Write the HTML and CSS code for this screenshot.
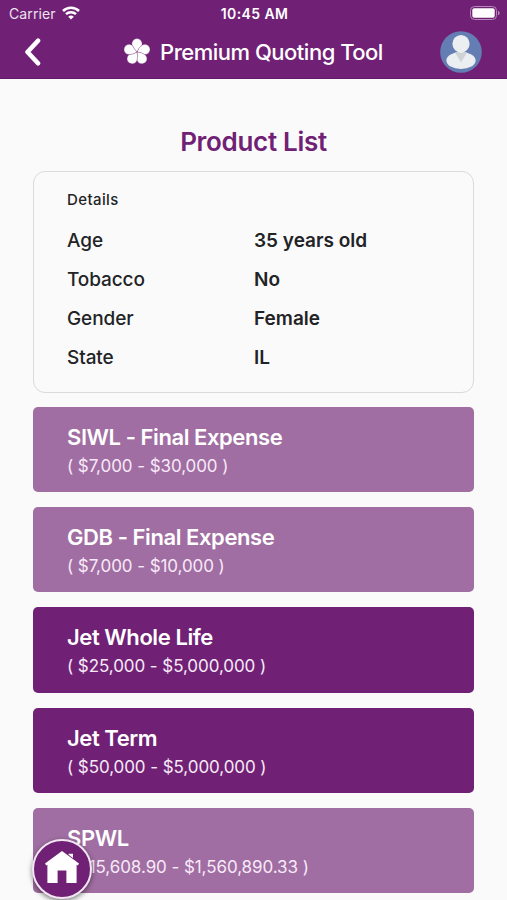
FILE: index.html
```
<!DOCTYPE html>
<html lang="en">
  <head>
    <meta charset="UTF-8" />
    <meta name="viewport" content="width=device-width, initial-scale=1.0" />
    <title>Premium Quoting Tool</title>
    <link rel="stylesheet" href="styles.css">
  </head>
  <body>
    <header class="header">
      <div class="status-bar">
        <div class="carrier">
          <span>Carrier</span>
          <svg class="wifi" viewBox="0 0 18 14">
            <path d="M1 5a11.4 11.4 0 0 1 16 0" />
            <path d="M4 8.2a7.1 7.1 0 0 1 10 0" />
            <path class="wifi-dot" d="M9 13.6 6.2 10.8a4 4 0 0 1 5.6 0z" />
          </svg>
        </div>
        <span class="time">10:45 AM</span>
        <svg class="battery" viewBox="0 0 30 14">
          <rect class="battery-case" x="0.5" y="0.5" width="26" height="13" rx="4" />
          <rect x="2.3" y="2.3" width="22.4" height="9.4" rx="2" />
          <path class="battery-cap" d="M28 4.7c2.2.8 2.2 3.8 0 4.6z" />
        </svg>
      </div>
      <nav class="nav-bar">
        <button class="back" type="button" aria-label="Back">
          <svg viewBox="0 0 18 28"><path d="M14 2.8 3.5 14 14 25.2" /></svg>
        </button>
        <div class="brand">
          <svg class="flower" viewBox="-14 -14 28 28">
            <path id="petal" d="M0 0Q-3.4-2.6-4.6-6.1A5.1 5.1 0 1 1 4.6-6.1Q2-3.6 0 0z" />
            <use href="#petal" transform="rotate(72)" />
            <use href="#petal" transform="rotate(144)" />
            <use href="#petal" transform="rotate(216)" />
            <use href="#petal" transform="rotate(288)" />
          </svg>
          <span class="brand-name">Premium Quoting Tool</span>
        </div>
        <svg class="avatar" viewBox="0 0 42 42">
          <circle cx="21" cy="21" r="20.8" fill="#647eb4" />
          <ellipse cx="21" cy="29.5" rx="14.6" ry="8.4" fill="#eceff1" />
          <path d="M15 21.5h12l-6 10z" fill="#cfd3d4" />
          <ellipse cx="21" cy="12.8" rx="8.6" ry="8.9" fill="#eceff1" />
        </svg>
      </nav>
    </header>

    <main class="content">
      <h1>Product List</h1>

      <section class="details">
        <h2>Details</h2>
        <dl>
          <dt>Age</dt>
          <dd>35 years old</dd>
          <dt>Tobacco</dt>
          <dd>No</dd>
          <dt>Gender</dt>
          <dd>Female</dd>
          <dt>State</dt>
          <dd>IL</dd>
        </dl>
      </section>

      <div class="products">
        <div class="product light">
          <h3>SIWL - Final Expense</h3>
          <p>( $7,000 - $30,000 )</p>
        </div>
        <div class="product light">
          <h3>GDB - Final Expense</h3>
          <p>( $7,000 - $10,000 )</p>
        </div>
        <div class="product">
          <h3>Jet Whole Life</h3>
          <p>( $25,000 - $5,000,000 )</p>
        </div>
        <div class="product">
          <h3>Jet Term</h3>
          <p>( $50,000 - $5,000,000 )</p>
        </div>
        <div class="product light">
          <h3>SPWL</h3>
          <p>( $15,608.90 - $1,560,890.33 )</p>
        </div>
      </div>
    </main>

    <!-- Floating home button -->
    <button class="home" type="button" aria-label="Home">
      <svg viewBox="0 0 34 32">
        <path d="M17 0 0 12.6 1.2 14.4 2.4 13.7V32H12.6V19.4H21.4V32H31.6V13.7L32.8 14.4 34 12.6z" />
        <path d="M23.6 2.8H28V7L23.6 3.8z" />
      </svg>
    </button>
  </body>
</html>
```
FILE: styles.css
```
* {
  margin: 0;
  padding: 0;
  box-sizing: border-box;
  font-family: "Inter", sans-serif;
}

body {
  height: 900px;
  overflow: hidden;
  background-color: #fafafa;
  color: #222326;
}

button {
  border: none;
  background: none;
  cursor: pointer;
}

/* Header */
.header {
  height: 79px;
  background-color: #702175;
  border-bottom: 1px solid #64196a;
  color: #fff;
}

.status-bar {
  display: grid;
  grid-template-columns: 1fr auto 1fr;
  align-items: center;
  height: 27px;
  padding: 0 7px 0 9px;
}

.carrier {
  display: flex;
  align-items: center;
  gap: 6px;
  font-size: 14px;
  letter-spacing: 0.1px;
  color: #eee2ef;
}

.wifi {
  width: 18px;
  height: 14px;
  margin-bottom: 2px;
  fill: none;
  stroke: #fff;
  stroke-width: 2.5;
}
.wifi-dot {
  fill: #fff;
  stroke: none;
}

.time {
  font-size: 14px;
  font-weight: 600;
  letter-spacing: 0.4px;
}

.battery {
  justify-self: end;
  width: 30px;
  height: 14px;
  margin-bottom: 1px;
  fill: #fff;
}
.battery-case {
  fill: none;
  stroke: #b489b7;
}
.battery-cap {
  fill: #b489b7;
}

.nav-bar {
  display: flex;
  align-items: center;
  justify-content: space-between;
  height: 50px;
  padding: 0 25px 0 24px;
}

.back {
  width: 18px;
  height: 28px;
}
.back svg {
  display: block;
  fill: none;
  stroke: #fff;
  stroke-width: 4.6;
  stroke-linecap: round;
  stroke-linejoin: round;
}

.brand {
  display: flex;
  align-items: center;
  gap: 9px;
  margin-left: 24px;
}
.brand-name {
  font-size: 22px;
  font-weight: 500;
  letter-spacing: -0.5px;
  white-space: nowrap;
}

.flower {
  width: 28px;
  height: 28px;
  fill: #fff;
  stroke: #702175;
  stroke-width: 0.35;
}

.avatar {
  width: 42px;
  height: 42px;
}

/* Page content */
.content {
  padding: 46px 33px 0;
}

h1 {
  height: 46px;
  line-height: 34px;
  font-size: 26px;
  font-weight: 600;
  letter-spacing: -0.3px;
  text-align: center;
  color: #702175;
}

.details {
  height: 222px;
  margin-bottom: 14px;
  padding: 18px 33px 0;
  border: 1px solid #d8dadb;
  border-radius: 12px;
}
.details h2 {
  height: 31px;
  line-height: 20px;
  font-size: 15px;
  font-weight: 500;
  letter-spacing: 0.4px;
}
.details dl {
  display: grid;
  grid-template-columns: 187px 1fr;
  line-height: 39px;
  font-size: 19px;
}
.details dt {
  font-weight: 500;
  letter-spacing: -0.1px;
}
.details dd {
  font-weight: 600;
}

/* Product cards */
.products {
  display: flex;
  flex-direction: column;
  gap: 15px;
}

.product {
  height: 85.2px;
  padding: 16px 34px 0;
  border-radius: 5px;
  background-color: #702175;
  color: #fff;
}
.product.light {
  background-color: #a06ea2;
}
.product h3 {
  line-height: 29px;
  font-size: 22px;
  font-weight: 600;
  letter-spacing: -0.43px;
}
.product p {
  line-height: 29px;
  font-size: 17px;
  letter-spacing: -0.07px;
  color: #f7e9f8;
}

.home {
  position: fixed;
  left: 32px;
  top: 839px;
  display: flex;
  align-items: center;
  justify-content: center;
  width: 60px;
  height: 60px;
  border: 2px solid #f1e6f2;
  border-radius: 50%;
  background-color: #702175;
  box-shadow: 0 2px 5px rgba(0, 0, 0, 0.5);
}
.home svg {
  width: 34px;
  height: 32px;
  margin-bottom: 5px;
  fill: #fff;
}
```
